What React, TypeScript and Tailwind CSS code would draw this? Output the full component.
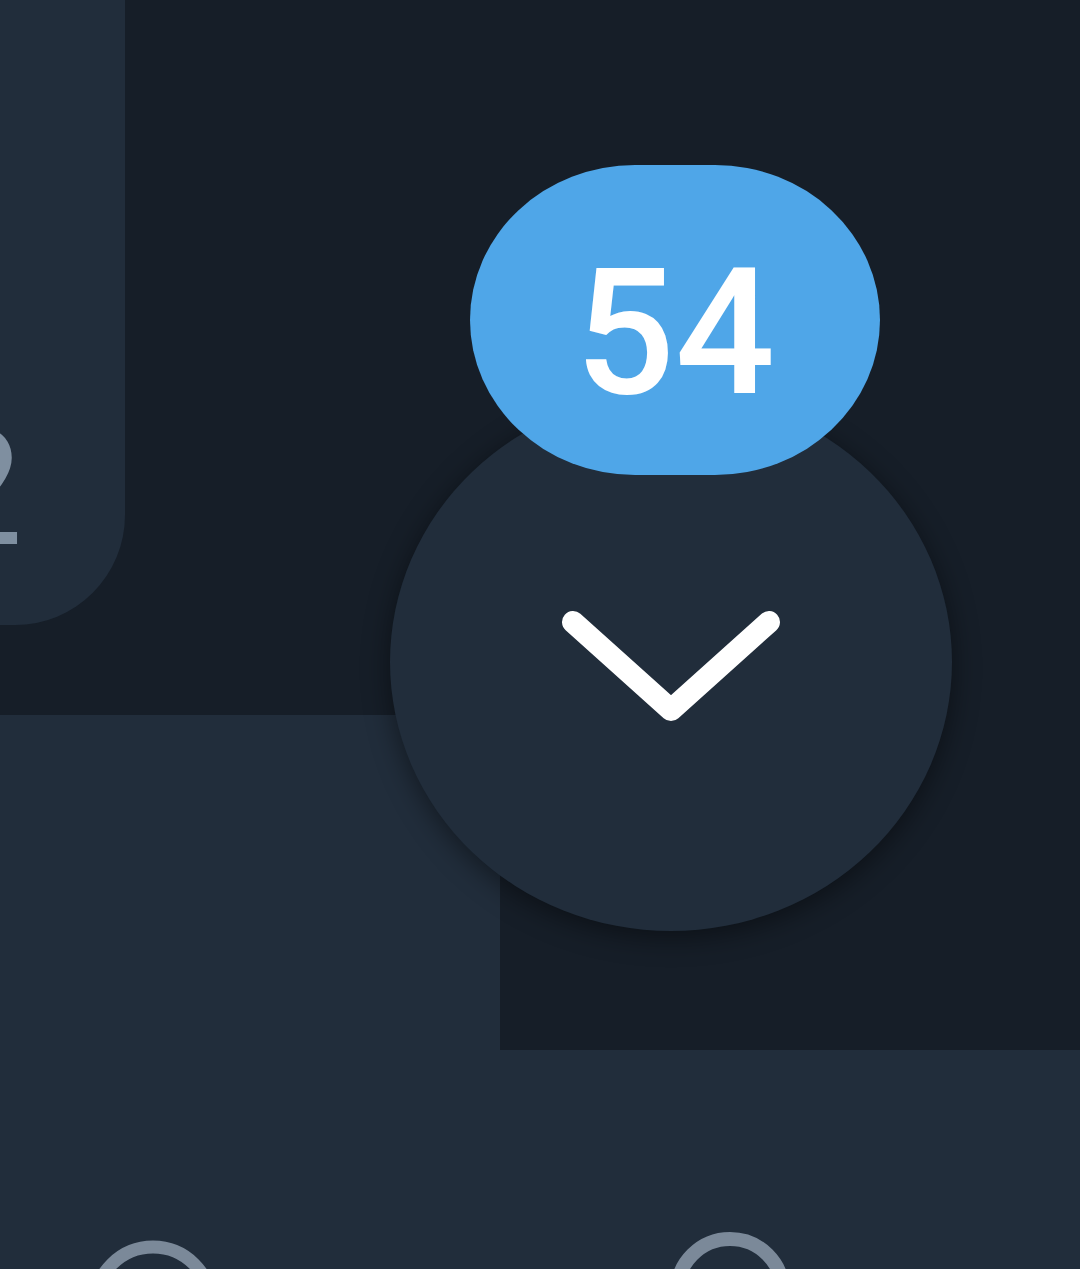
const panel = "bg-[#212d3b]";

export default function App() {
  return (
    <div
      className="relative flex h-[1269px] w-[1080px] flex-col overflow-hidden bg-[#161e28]"
      style={{ fontFamily: "Roboto, 'Noto Sans', sans-serif" }}
    >
      <div className="relative h-[1050px] shrink-0">
        {/* message bubble, mostly cut off */}
        <div className={`${panel} relative h-[625px] w-[125px] overflow-hidden rounded-br-[110px]`}>
          <span className="absolute left-[-68px] top-[408px] text-[162px] leading-none text-[#7f8fa0]">2</span>
        </div>

        {/* input area edge */}
        <div className={`${panel} mt-[90px] h-[335px] w-[500px] rounded-tr-[8px]`} />

        {/* scroll-to-bottom button */}
        <button className="absolute left-[390px] top-[393px] flex h-[538px] w-[562px] items-center justify-center rounded-[50%] bg-[#212d3b] shadow-[0_6px_28px_rgba(0,0,0,0.45)]">
          <svg width="240" height="140" viewBox="0 0 240 140" className="mt-[-10px]">
            <path d="M22 35 L120 123 L218 35" fill="none" stroke="white" strokeWidth="22" strokeLinecap="round" strokeLinejoin="round" />
          </svg>
        </button>

        <div className="absolute left-[470px] top-[165px] flex h-[310px] w-[410px] items-center justify-center rounded-[165px/155px] bg-[#4fa6e8]">
          <span className="mt-[26px] text-[176px] font-medium leading-none text-white">54</span>
        </div>
      </div>

      {/* bottom bar */}
      <div className={`${panel} relative flex-1`}>
        <svg className="absolute left-[88px] top-[190px]" width="130" height="130" viewBox="0 0 130 130">
          <circle cx="65" cy="65" r="58" fill="none" stroke="#7b8999" strokeWidth="13" />
        </svg>
        <svg className="absolute left-[670px] top-[182px]" width="120" height="200" viewBox="0 0 120 200">
          <rect x="7" y="7" width="106" height="180" rx="53" fill="none" stroke="#7b8999" strokeWidth="14" />
        </svg>
      </div>
    </div>
  );
}
